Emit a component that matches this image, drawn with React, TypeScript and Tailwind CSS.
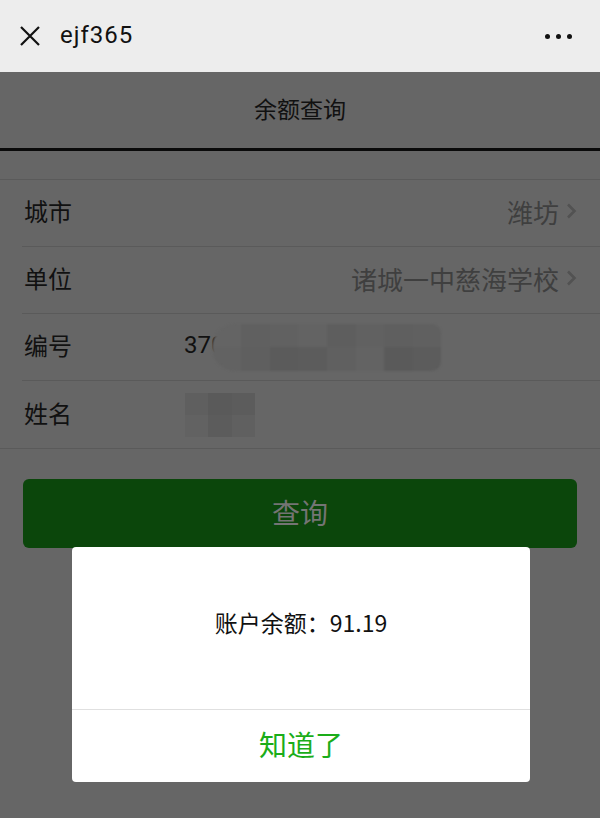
import type { FC } from "react";

const font = { fontFamily: '"Noto Sans CJK SC", "Noto Sans", sans-serif' };

const TopBar: FC = () => (
  <div className="flex h-[72px] items-center bg-[#ededed] px-[18px]">
    <svg width="24" height="24" viewBox="0 0 24 24" className="shrink-0">
      <path d="M3 3 L21 21 M21 3 L3 21" stroke="#111" strokeWidth="2.2" fill="none" />
    </svg>
    <span
      className="ml-[18px] pb-[2px] text-[24px] tracking-[1px] text-[#111]"
      style={{ fontFamily: 'Roboto, "Noto Sans CJK SC", sans-serif' }}
    >
      ejf365
    </span>
    <div className="ml-auto mr-[10px] flex gap-[6px]">
      <span className="h-[5px] w-[5px] rounded-full bg-[#111]" />
      <span className="h-[5px] w-[5px] rounded-full bg-[#111]" />
      <span className="h-[5px] w-[5px] rounded-full bg-[#111]" />
    </div>
  </div>
);

const Chevron: FC = () => (
  <svg width="11" height="18" viewBox="0 0 11 18" className="ml-[7px] shrink-0">
    <path d="M2 2.5 L8.5 9 L2 15.5" stroke="#525252" strokeWidth="2.6" fill="none" />
  </svg>
);

const Row: FC<{ label: string; children?: React.ReactNode; last?: boolean }> = ({
  label,
  children,
  last,
}) => (
  <div className="pl-[22px]">
    <div
      className={
        "flex h-[67px] items-center pb-[4px] pr-[23px] " +
        (last ? "" : "border-b border-[#5a5a5a]")
      }
    >
      <span className="w-[160px] shrink-0 pl-[2px] text-[24px] text-[#111]">{label}</span>
      <div className="flex flex-1 items-center">{children}</div>
    </div>
  </div>
);

const blobShades = [
  ["#646464", "#606060", "#616161", "#636363", "#5e5e5e", "#616161", "#5f5f5f", "#606060"],
  ["#626262", "#5f5f5f", "#5b5b5b", "#5c5c5c", "#606060", "#636363", "#5a5a5a", "#5c5c5c"],
];

const NumberBlur: FC = () => (
  <div className="relative ml-[-12px] mt-[4px] flex h-[47px] w-[229px] flex-col overflow-hidden rounded-l-[24px] rounded-r-[10px] blur-[1px]">
    {blobShades.map((r, i) => (
      <div key={i} className="flex flex-1">
        {r.map((c, j) => (
          <div key={j} className="flex-1" style={{ background: c }} />
        ))}
      </div>
    ))}
  </div>
);

const NameBlur: FC = () => (
  <div className="ml-[3px] mt-[4px] flex h-[44px] w-[70px] flex-col">
    <div className="flex flex-1">
      <div className="flex-1 bg-[#5f5f5f]" />
      <div className="flex-1 bg-[#5a5a5a]" />
      <div className="flex-1 bg-[#5c5c5c]" />
    </div>
    <div className="flex flex-1">
      <div className="flex-1 bg-[#626262]" />
      <div className="flex-1 bg-[#5c5c5c]" />
      <div className="flex-1 bg-[#606060]" />
    </div>
  </div>
);

const App: FC = () => {
  return (
    <div className="relative min-h-[818px] w-[600px] bg-[#666666]" style={font}>
      <TopBar />
      <div className="flex h-[76px] items-center justify-center pb-[3px] text-[23px] text-[#111]">
        余额查询
      </div>
      <div className="h-[3px] bg-[#0a0a0a]" />
      <div className="h-[28px]" />
      <div className="border-y border-[#5a5a5a]">
        <Row label="城市">
          <span className="ml-auto text-[26px] text-[#3f3f3f]">潍坊</span>
          <Chevron />
        </Row>
        <Row label="单位">
          <span className="ml-auto text-[26px] text-[#3f3f3f]">诸城一中慈海学校</span>
          <Chevron />
        </Row>
        <Row label="编号">
          <span
            className="ml-[2px] text-[24px] text-[#111]"
            style={{ fontFamily: 'Roboto, "Noto Sans CJK SC", sans-serif' }}
          >
            370
          </span>
          <NumberBlur />
        </Row>
        <Row label="姓名" last>
          <NameBlur />
        </Row>
      </div>
      <div className="px-[23px] pt-[30px]">
        <button className="flex h-[69px] w-full items-center justify-center rounded-[6px] bg-[#0b460b] pb-[4px] text-[28px] text-[#747474]">
          查询
        </button>
      </div>

      <div className="absolute left-[72px] top-[547px] w-[458px] overflow-hidden rounded-[4px] bg-white">
        <div className="flex h-[162px] items-center justify-center pb-[12px] text-[23px] text-[#111]">
          账户余额：91.19
        </div>
        <div className="h-px bg-[#e0e0e0]" />
        <div className="flex h-[72px] items-center justify-center pb-[4px] text-[28px] text-[#1aad19]">
          知道了
        </div>
      </div>
    </div>
  );
};

export default App;
